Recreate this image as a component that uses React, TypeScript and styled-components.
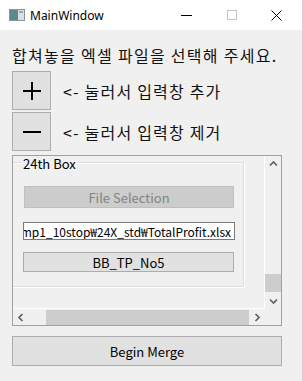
import React from 'react';
import styled, { createGlobalStyle } from 'styled-components';

const Global = createGlobalStyle`
  html, body { margin: 0; padding: 0; background: #f0f0f0; }
  body { font-family: "Noto Sans CJK KR", "Noto Sans", sans-serif; }
  * { box-sizing: border-box; }
`;

const Window = styled.div`
  width: 303px;
  height: 381px;
  background: #f0f0f0;
  display: flex;
  flex-direction: column;
  overflow: hidden;
  border-right: 1px solid #d4d4d4;
`;

const TitleBar = styled.div`
  height: 30px;
  flex-shrink: 0;
  background: #ffffff;
  display: flex;
  align-items: center;
  padding-left: 9px;
`;

const TitleText = styled.span`
  font-family: "Noto Sans", sans-serif;
  font-size: 12px;
  color: #000;
  margin-left: 5px;
`;

const Controls = styled.div`
  margin-left: auto;
  display: flex;
  height: 30px;
  padding-right: 3px;
`;

const CtrlBtn = styled.div`
  width: 45px;
  height: 30px;
  display: flex;
  align-items: center;
  justify-content: center;
`;

const Body = styled.div`
  display: flex;
  flex-direction: column;
  padding: 15px 0 0 12px;
`;

const Label = styled.div`
  font-size: 16px;
  letter-spacing: 1.3px;
  line-height: 20px;
  height: 20px;
  color: #111;
  white-space: nowrap;
`;

const ToolRow = styled.div<{ $mt: number }>`
  display: flex;
  align-items: center;
  gap: 12px;
  margin-top: ${(p) => p.$mt}px;
`;

const SquareBtn = styled.div`
  width: 39px;
  height: 39px;
  background: #e1e1e1;
  border: 1px solid #adadad;
  display: flex;
  align-items: center;
  justify-content: center;
`;

const HintText = styled.span`
  font-size: 16px;
  letter-spacing: 1.2px;
  color: #111;
  white-space: nowrap;
`;

const ScrollFrame = styled.div`
  margin-top: 4px;
  width: 270px;
  height: 171px;
  border: 1px solid #a0a0a0;
  display: grid;
  grid-template-columns: 252px 16px;
  grid-template-rows: 153px 16px;
`;

const Viewport = styled.div`
  overflow: hidden;
  border-right: 1px solid #ffffff;
  border-bottom: 1px solid #ffffff;
  padding-top: 6px;
`;

const GroupBox = styled.div`
  position: relative;
  width: 231px;
  height: 125px;
  border: 1px solid #dcdcdc;
  border-left: none;
  box-shadow: 1px 1px 0 #ffffff, inset 0 1px 0 #ffffff;
  display: flex;
  flex-direction: column;
  padding: 23px 0 0 10px;
`;

const GroupTitle = styled.span`
  position: absolute;
  left: 9px;
  top: -6px;
  padding: 0 2px 0 1px;
  background: #f0f0f0;
  font-size: 13px;
  line-height: 13px;
  color: #000;
`;

const PushButton = styled.div<{ $disabled?: boolean; $w: number; $h: number; $mt: number; $ml?: number }>`
  width: ${(p) => p.$w}px;
  height: ${(p) => p.$h}px;
  margin-top: ${(p) => p.$mt}px;
  margin-left: ${(p) => p.$ml ?? 0}px;
  background: ${(p) => (p.$disabled ? '#cccccc' : '#e1e1e1')};
  border: 1px solid ${(p) => (p.$disabled ? '#bfbfbf' : '#adadad')};
  color: ${(p) => (p.$disabled ? '#838383' : '#000')};
  font-size: 13px;
  display: flex;
  align-items: center;
  justify-content: center;
  white-space: nowrap;
`;

const LineEdit = styled.div`
  width: 212px;
  height: 18px;
  margin-top: 14px;
  background: #ffffff;
  border: 1px solid #7a7a7a;
  overflow: hidden;
  display: flex;
  justify-content: flex-end;
  align-items: center;
  padding-right: 3px;
  font-size: 12px;
  color: #000;
  white-space: nowrap;
`;

const VBar = styled.div`
  background: #f0f0f0;
  display: flex;
  flex-direction: column;
`;

const HBar = styled.div`
  background: #f0f0f0;
  display: flex;
`;

const ArrowCell = styled.div`
  width: 16px;
  height: 16px;
  flex-shrink: 0;
  display: flex;
  align-items: center;
  justify-content: center;
`;

const VTrack = styled.div`
  flex: 1;
  display: flex;
  flex-direction: column;
  justify-content: flex-end;
  align-items: center;
  padding-bottom: 1px;
`;

const HTrack = styled.div`
  flex: 1;
  display: flex;
  justify-content: flex-end;
  align-items: center;
`;

const Thumb = styled.div<{ $w: number; $h: number }>`
  width: ${(p) => p.$w}px;
  height: ${(p) => p.$h}px;
  background: #cdcdcd;
`;

const Corner = styled.div`
  background: #f0f0f0;
`;

const MergeButton = styled(PushButton)``;

const Chevron = ({ dir }: { dir: 'up' | 'down' | 'left' | 'right' }) => {
  const pts: Record<string, string> = {
    up: '1,5.5 4.5,2 8,5.5',
    down: '1,2.5 4.5,6 8,2.5',
    left: '5.5,1 2,4.5 5.5,8',
    right: '2.5,1 6,4.5 2.5,8',
  };
  return (
    <svg width="9" height="9" viewBox="0 0 9 9">
      <polyline points={pts[dir]} fill="none" stroke="#606060" strokeWidth="1.7" />
    </svg>
  );
};

const AppIcon = () => (
  <svg width="16" height="12" viewBox="0 0 16 12">
    <rect x="0.5" y="0.5" width="15" height="11" fill="#d9dfe2" stroke="#8a9599" />
    <rect x="1" y="1" width="8" height="10" fill="#5c8a86" />
    <rect x="10" y="2" width="4" height="2" fill="#9aa6aa" />
  </svg>
);

export default function App() {
  return (
    <>
      <Global />
      <Window>
        <TitleBar>
          <AppIcon />
          <TitleText>MainWindow</TitleText>
          <Controls>
            <CtrlBtn>
              <svg width="11" height="11" viewBox="0 0 11 11">
                <line x1="0" y1="5.5" x2="11" y2="5.5" stroke="#000" strokeWidth="1" />
              </svg>
            </CtrlBtn>
            <CtrlBtn>
              <svg width="10" height="10" viewBox="0 0 10 10">
                <rect x="0.5" y="0.5" width="9" height="9" fill="none" stroke="#c4c4c4" strokeWidth="1" />
              </svg>
            </CtrlBtn>
            <CtrlBtn>
              <svg width="11" height="11" viewBox="0 0 11 11">
                <path d="M0.5 0.5 L10.5 10.5 M10.5 0.5 L0.5 10.5" stroke="#000" strokeWidth="1" />
              </svg>
            </CtrlBtn>
          </Controls>
        </TitleBar>
        <Body>
          <Label>합쳐놓을 엑셀 파일을 선택해 주세요.</Label>
          <ToolRow $mt={6}>
            <SquareBtn>
              <svg width="18" height="18" viewBox="0 0 18 18">
                <path d="M9 0 V18 M0 9 H18" stroke="#000" strokeWidth="2" />
              </svg>
            </SquareBtn>
            <HintText>&lt;- 눌러서 입력창 추가</HintText>
          </ToolRow>
          <ToolRow $mt={2}>
            <SquareBtn>
              <svg width="18" height="18" viewBox="0 0 18 18">
                <path d="M0 9 H18" stroke="#000" strokeWidth="2" />
              </svg>
            </SquareBtn>
            <HintText>&lt;- 눌러서 입력창 제거</HintText>
          </ToolRow>
          <ScrollFrame>
            <Viewport>
              <GroupBox>
                <GroupTitle>24th Box</GroupTitle>
                <PushButton $disabled $w={210} $h={22} $mt={0} $ml={1}>File Selection</PushButton>
                <LineEdit>C:₩Users₩Backtest₩Temp1_10stop₩24X_std₩TotalProfit.xlsx</LineEdit>
                <PushButton $w={211} $h={20} $mt={12}>BB_TP_No5</PushButton>
              </GroupBox>
            </Viewport>
            <VBar>
              <ArrowCell><Chevron dir="up" /></ArrowCell>
              <VTrack><Thumb $w={16} $h={18} /></VTrack>
              <ArrowCell><Chevron dir="down" /></ArrowCell>
            </VBar>
            <HBar>
              <ArrowCell><Chevron dir="left" /></ArrowCell>
              <HTrack><Thumb $w={203} $h={15} /></HTrack>
              <ArrowCell><Chevron dir="right" /></ArrowCell>
            </HBar>
            <Corner />
          </ScrollFrame>
          <MergeButton $w={270} $h={30} $mt={10}>Begin Merge</MergeButton>
        </Body>
      </Window>
    </>
  );
}
